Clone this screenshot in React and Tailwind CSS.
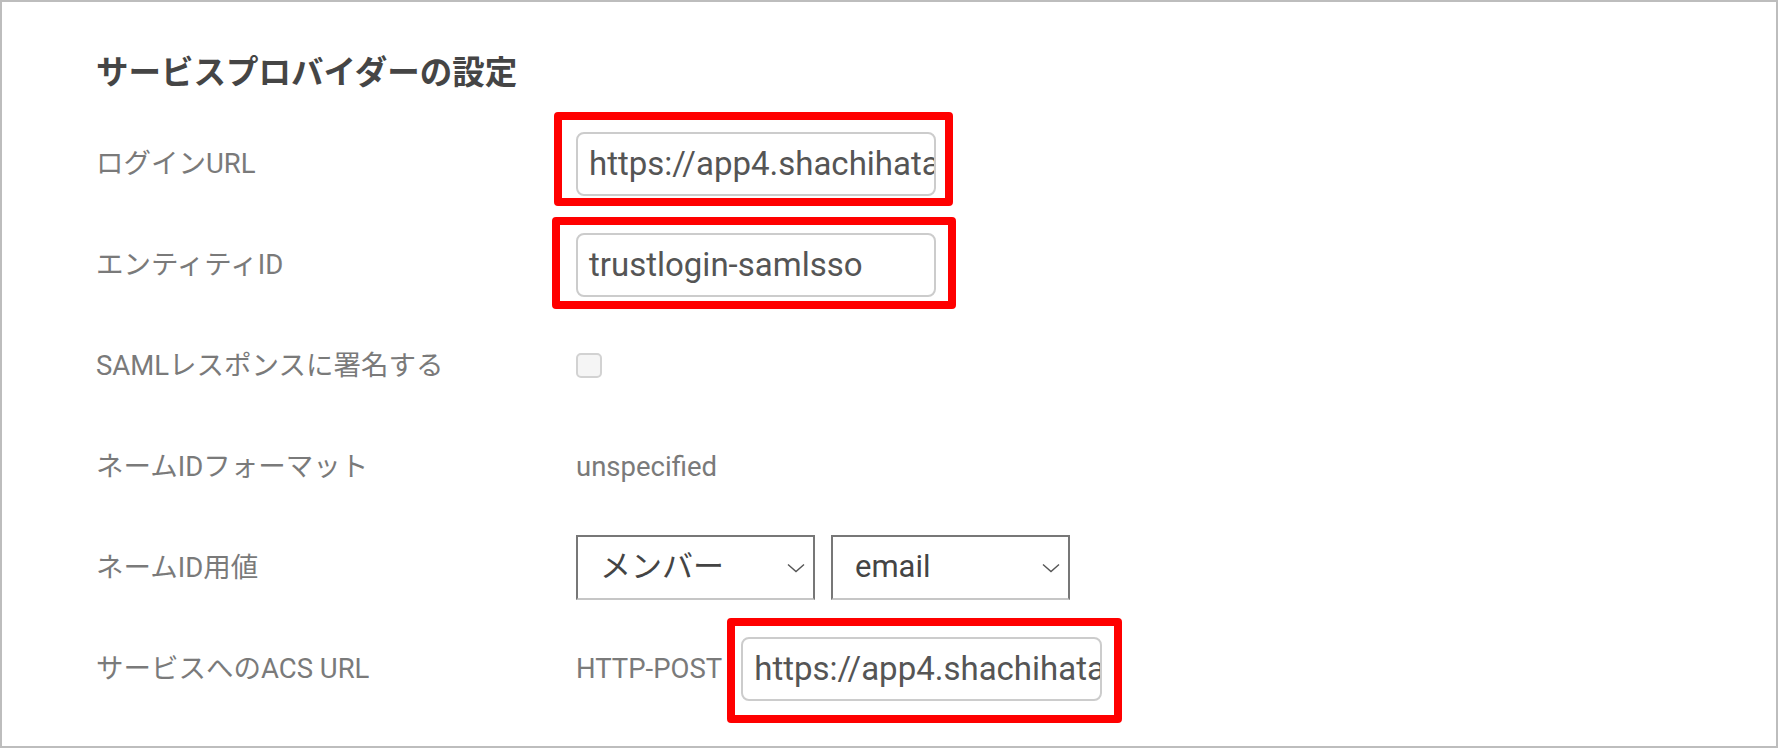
import React from 'react';

const font = { fontFamily: 'Roboto, "Noto Sans CJK JP", sans-serif' };

const Highlight = ({ className }) => (
    <div className={`absolute border-[8px] border-[#ff0000] rounded-[4px] pointer-events-none ${className}`} />
);

const TextField = ({ value, width = 'w-[360px]', highlight }) => (
    <div className="relative">
        <div className={`${width} h-[64px] border-2 border-[#cccccc] rounded-[8px] bg-white pl-[11px] flex items-center overflow-hidden whitespace-nowrap text-[33px] text-[#555555]`}>
            {value}
        </div>
        {highlight && <Highlight className={highlight} />}
    </div>
);

const Chevron = () => (
    <svg width="18" height="10" viewBox="0 0 18 10" fill="none" stroke="#555555" strokeWidth="1.4">
        <path d="M1 1.5 L9 8.5 L17 1.5" />
    </svg>
);

const SelectBox = ({ value }) => (
    <div className="w-[239px] h-[65px] border-2 border-[#777777] border-b-[#c6c6c6] bg-white flex items-center justify-between pl-[22px] pr-[8px] text-[31px] text-[#444444]">
        <span>{value}</span>
        <Chevron />
    </div>
);

const Row = ({ label, children }) => (
    <div className="h-[101px] flex items-center">
        <div className="w-[480px] shrink-0 text-[27.5px] text-[#7a7a7a]">{label}</div>
        <div className="flex items-center">{children}</div>
    </div>
);

export default function App() {
    return (
        <div style={font} className="w-[1778px] h-[748px] bg-white border-2 border-[#bdbdbd] pl-[94px] pt-[51px] overflow-hidden">
            <h2 className="h-[40px] leading-[40px] text-[32.5px] font-bold text-[#454545] mb-[20px]">サービスプロバイダーの設定</h2>

            <Row label="ログインURL">
                <TextField value="https://app4.shachihata.co.jp/login" highlight="-left-[22px] -top-[20px] -right-[17px] -bottom-[10px]" />
            </Row>
            <Row label="エンティティID">
                <TextField value="trustlogin-samlsso" highlight="-left-[24px] -top-[16px] -right-[20px] -bottom-[12px]" />
            </Row>
            <Row label="SAMLレスポンスに署名する">
                <div className="w-[26px] h-[25px] border-2 border-[#d2d2d2] bg-[#f5f5f5] rounded-[5px]" />
            </Row>
            <Row label="ネームIDフォーマット">
                <span className="text-[27.5px] text-[#7a7a7a]">unspecified</span>
            </Row>
            <Row label="ネームID用値">
                <div className="flex gap-[16px]">
                    <SelectBox value="メンバー" />
                    <SelectBox value="email" />
                </div>
            </Row>
            <Row label="サービスへのACS URL">
                <span className="text-[27.5px] text-[#7a7a7a] mr-[19px]">HTTP-POST</span>
                <TextField value="https://app4.shachihata.co.jp/acs" width="w-[361px]" highlight="-left-[14px] -top-[19px] -right-[20px] -bottom-[22px]" />
            </Row>
        </div>
    );
}
